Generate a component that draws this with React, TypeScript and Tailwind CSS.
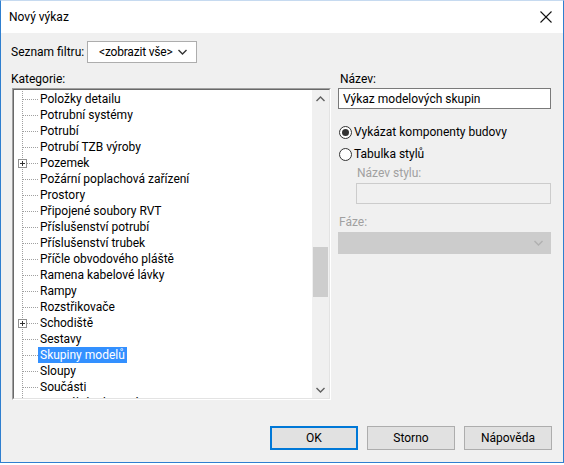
import React from "react";

const items: { label: string; plus?: boolean; selected?: boolean }[] = [
  { label: "Položky detailu" },
  { label: "Potrubní systémy" },
  { label: "Potrubí" },
  { label: "Potrubí TZB výroby" },
  { label: "Pozemek", plus: true },
  { label: "Požární poplachová zařízení" },
  { label: "Prostory" },
  { label: "Připojené soubory RVT" },
  { label: "Příslušenství potrubí" },
  { label: "Příslušenství trubek" },
  { label: "Příčle obvodového pláště" },
  { label: "Ramena kabelové lávky" },
  { label: "Rampy" },
  { label: "Rozstřikovače" },
  { label: "Schodiště", plus: true },
  { label: "Sestavy" },
  { label: "Skupiny modelů", selected: true },
  { label: "Sloupy" },
  { label: "Součásti" },
  { label: "Speciální vybavení" },
];

function TreeLines({ plus }: { plus?: boolean }) {
  return (
    <svg width="24" height="16" className="shrink-0" shapeRendering="crispEdges">
      <line x1="8.5" y1="0" x2="8.5" y2="16" stroke="#a0a0a0" strokeDasharray="1 1" />
      <line x1="9" y1="8.5" x2="24" y2="8.5" stroke="#a0a0a0" strokeDasharray="1 1" />
      {plus && (
        <g>
          <rect x="4.5" y="4.5" width="8" height="8" fill="#fff" stroke="#919191" />
          <line x1="6" y1="8.5" x2="11" y2="8.5" stroke="#333" />
          <line x1="8.5" y1="6" x2="8.5" y2="11" stroke="#333" />
        </g>
      )}
    </svg>
  );
}

function Chevron({ up, color = "#606060" }: { up?: boolean; color?: string }) {
  return (
    <svg width="9" height="6" viewBox="0 0 9 6" className="shrink-0">
      {up ? (
        <polyline points="0.5,5 4.5,1 8.5,5" fill="none" stroke={color} strokeWidth="1.4" />
      ) : (
        <polyline points="0.5,1 4.5,5 8.5,1" fill="none" stroke={color} strokeWidth="1.4" />
      )}
    </svg>
  );
}

function Radio({ checked }: { checked?: boolean }) {
  return (
    <span className="w-[13px] h-[13px] rounded-full border border-[#333] bg-white flex items-center justify-center shrink-0">
      {checked && <span className="w-[7px] h-[7px] rounded-full bg-[#333]" />}
    </span>
  );
}

export default function App() {
  return (
    <div
      className="w-[564px] h-[465px] bg-white text-[12px] text-black whitespace-nowrap"
      style={{ fontFamily: "Roboto, 'Liberation Sans', sans-serif" }}
    >
      <div className="w-[564px] h-[463px] border border-[#2f7fcf] border-t-[#c6daf0] flex flex-col bg-[#f0f0f0]">
        {/* Title bar */}
        <div className="h-[32px] bg-white flex items-center justify-between pl-[8px] pr-[11px] shrink-0">
          <span className="text-[12px] leading-none">Nový výkaz</span>
          <svg width="12" height="12" viewBox="0 0 12 12">
            <line x1="0.5" y1="0.5" x2="11.5" y2="11.5" stroke="#111" strokeWidth="1.1" />
            <line x1="11.5" y1="0.5" x2="0.5" y2="11.5" stroke="#111" strokeWidth="1.1" />
          </svg>
        </div>

        <div className="flex-1 flex flex-col pl-[10px] pr-[11px] pt-[8px]">
          {/* Filter row */}
          <div className="flex items-center h-[22px]">
            <span className="w-[76px]">Seznam filtru:</span>
            <div className="w-[110px] h-[22px] border border-[#adadad] bg-white flex items-center pl-[11px] pr-[9px]">
              <span className="tracking-[-0.2px]">&lt;zobrazit vše&gt;</span>
              <span className="ml-auto">
                <Chevron color="#333" />
              </span>
            </div>
          </div>

          <div className="flex mt-[8px] gap-[7px]">
            {/* Left column */}
            <div className="w-[320px] flex flex-col">
              <span className="h-[16px] leading-[16px]">Kategorie:</span>
              <div className="mt-[1px] ml-[1px] w-[319px] h-[312px] border-t border-l border-[#a0a0a0] border-r border-b border-r-white border-b-white">
                <div className="w-full h-full border-t border-l border-[#696969] border-r border-b border-r-[#e3e3e3] border-b-[#e3e3e3] bg-white flex overflow-hidden">
                  <div className="flex-1 flex flex-col overflow-hidden pt-[1px]">
                    {items.map((it) => (
                      <div key={it.label} className="h-[16px] flex items-center shrink-0">
                        <TreeLines plus={it.plus} />
                        <span
                          className={
                            it.selected
                              ? "bg-[#3390ff] text-white px-[2px] h-[16px] leading-[16px]"
                              : "px-[2px] h-[16px] leading-[16px]"
                          }
                        >
                          {it.label}
                        </span>
                      </div>
                    ))}
                  </div>
                  {/* Scrollbar */}
                  <div className="w-[17px] h-full bg-[#f0f0f0] flex flex-col items-center shrink-0">
                    <div className="h-[17px] w-full flex items-center justify-center">
                      <Chevron up />
                    </div>
                    <div className="flex-1 w-full px-[1px] pt-[140px]">
                      <div className="w-full h-[50px] bg-[#cdcdcd]" />
                    </div>
                    <div className="h-[17px] w-full flex items-center justify-center">
                      <Chevron />
                    </div>
                  </div>
                </div>
              </div>
            </div>

            {/* Right column */}
            <div className="w-[213px] flex flex-col">
              <span className="h-[16px] leading-[16px] pl-[2px]">Název:</span>
              <div className="mt-[1px] h-[21px] border border-[#7a7a7a] bg-white flex items-center pl-[4px]">
                Výkaz modelových skupin
              </div>
              <div className="mt-[15px] flex items-center gap-[2px] h-[16px] pl-[1px]">
                <Radio checked />
                <span>Vykázat komponenty budovy</span>
              </div>
              <div className="mt-[6px] flex items-center gap-[2px] h-[16px] pl-[1px]">
                <Radio />
                <span>Tabulka stylů</span>
              </div>
              <div className="pl-[18px] flex flex-col">
                <span className="mt-[3px] h-[16px] leading-[16px] text-[#a0a0a0] pl-[1px]">Název stylu:</span>
                <div className="mt-[2px] h-[21px] border border-[#cccccc] bg-[#f0f0f0]" />
              </div>
              <span className="mt-[10px] h-[16px] leading-[16px] text-[#a0a0a0] pl-[1px]">Fáze:</span>
              <div className="mt-[2px] h-[22px] border border-[#cccccc] bg-[#cccccc] flex items-center justify-end pr-[7px]">
                <Chevron color="#b0b0b0" />
              </div>
            </div>
          </div>

          {/* Buttons */}
          <div className="mt-auto mb-[12px] flex justify-end gap-[9px]">
            <button className="w-[88px] h-[24px] bg-[#e1e1e1] border-2 border-[#0078d7]">OK</button>
            <button className="w-[88px] h-[24px] bg-[#e1e1e1] border border-[#adadad]">Storno</button>
            <button className="w-[88px] h-[24px] bg-[#e1e1e1] border border-[#adadad]">Nápověda</button>
          </div>
        </div>
      </div>
    </div>
  );
}
